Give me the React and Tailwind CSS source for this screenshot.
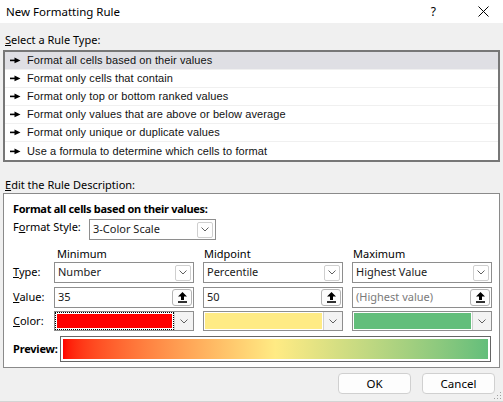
import React from 'react';

const RULES = [
    'Format all cells based on their values',
    'Format only cells that contain',
    'Format only top or bottom ranked values',
    'Format only values that are above or below average',
    'Format only unique or duplicate values',
    'Use a formula to determine which cells to format',
];

function Bullet() {
    return (
        <svg width="11" height="7" viewBox="0 0 11 7" className="shrink-0">
            <rect x="0" y="2.6" width="6" height="1.6" fill="#000" />
            <polygon points="4.5,0.5 10.5,3.4 4.5,6.3" fill="#000" />
        </svg>
    );
}

function Chevron() {
    return (
        <svg width="8" height="5" viewBox="0 0 8 5">
            <polyline points="0.5,0.5 4,4 7.5,0.5" fill="none" stroke="#606060" strokeWidth="1" />
        </svg>
    );
}

function Select({ value, className = '' }) {
    return (
        <div className={`h-[21px] bg-white border border-[#8e8e8e] flex items-center pl-[3px] pr-[2px] ${className}`}>
            <span className="flex-1 text-[#1a1a1a] whitespace-nowrap">{value}</span>
            <div className="w-[16px] h-[16px] border border-[#cfcfcf] rounded-[2px] flex items-center justify-center">
                <Chevron />
            </div>
        </div>
    );
}

function ValueBox({ value, muted }) {
    return (
        <div className="h-[21px] bg-white border border-[#8e8e8e] flex items-center pl-[3px] pr-px">
            <span className={`flex-1 whitespace-nowrap ${muted ? 'text-[#7a7a7a]' : 'text-[#1a1a1a]'}`}>{value}</span>
            <div className="w-[20px] h-[17px] border border-[#b4b4b4] rounded-[3px] bg-[#fdfdfd] flex items-center justify-center">
                <svg width="9" height="11" viewBox="0 0 9 11">
                    <polygon points="4.5,0 9,4.6 6,4.6 6,8 3,8 3,4.6 0,4.6" fill="#000" />
                    <rect x="0" y="9.2" width="9" height="1.6" fill="#000" />
                </svg>
            </div>
        </div>
    );
}

function ColorBox({ color, focused }) {
    return (
        <div className="h-[20px] bg-white border border-[#8e8e8e] flex items-stretch">
            <div className={`flex-1 p-px ${focused ? 'border border-dotted border-black' : 'p-[2px]'}`}>
                <div className="w-full h-full" style={{ background: color }} />
            </div>
            <div className="w-[19px] bg-[#f3f3f3] border-l border-[#d0d0d0] flex items-center justify-center">
                <Chevron />
            </div>
        </div>
    );
}

export default function App() {
    return (
        <div className="w-[503px] h-[402px] bg-[#f0f0f0] flex flex-col text-[11px] text-black overflow-hidden relative border-b border-[#d4d4d4]"
            style={{ fontFamily: '"Noto Sans", "Liberation Sans", sans-serif' }}>
            {/* title bar */}
            <div className="h-[23px] bg-white flex items-center pl-[6px] shrink-0">
                <span className="text-[11.5px]">New Formatting Rule</span>
                <span className="ml-auto mr-[42px] text-[12px]">?</span>
                <svg width="11" height="11" viewBox="0 0 11 11" className="mr-[14px]">
                    <path d="M0.5 0.5L10.5 10.5M10.5 0.5L0.5 10.5" stroke="#000" strokeWidth="1" />
                </svg>
            </div>

            <div className="px-[3px] flex flex-col">
                <div className="mt-[9px] h-[18px] leading-[16px] pl-[2px]">
                    <span className="underline">S</span>elect a Rule Type:
                </div>

                {/* rule list */}
                <div className="h-[112px] border-2 border-[#777] bg-white flex flex-col"
                    style={{ fontFamily: '"Liberation Sans", Arial, sans-serif' }}>
                    {RULES.map((r, i) => (
                        <div key={i}
                            className={`h-[18px] flex items-center gap-[6px] pl-[5px] border-b border-[#f0f0f0] ${i === 0 ? 'bg-[#dfdfe4]' : ''} ${i === 5 ? 'border-b-0' : ''}`}>
                            <Bullet />
                            <span className="text-[11px] tracking-[0.1px] text-[#111]">{r}</span>
                        </div>
                    ))}
                </div>

                <div className="mt-[15px] h-[16px] leading-[16px] pl-[2px]">
                    <span className="underline">E</span>dit the Rule Description:
                </div>

                {/* rule description panel */}
                <div className="h-[175px] border border-[#8a8a8a] bg-white pl-[9px] pt-[6px] flex flex-col">
                    <div className="h-[17px] leading-[17px] font-bold tracking-[-0.3px]">Format all cells based on their values:</div>
                    <div className="mt-[2px] flex items-start">
                        <div className="w-[76px] leading-[15px]">
                            F<span className="underline">o</span>rmat Style:
                        </div>
                        <Select value="3-Color Scale" className="w-[127px]" />
                    </div>

                    <div className="mt-[6px] grid grid-cols-[32px_140px_140px_140px] gap-x-[9px] items-center">
                        <div />
                        <div className="pl-[3px] h-[16px] leading-[16px]">Minimum</div>
                        <div className="pl-[1px] h-[16px] leading-[16px]">Midpoint</div>
                        <div className="pl-[1px] h-[16px] leading-[16px]">Maximum</div>
                    </div>

                    <div className="grid grid-cols-[32px_140px_140px_140px] gap-x-[9px] items-center">
                        <div><span className="underline">T</span>ype:</div>
                        <Select value="Number" />
                        <Select value="Percentile" />
                        <Select value="Highest Value" />
                    </div>

                    <div className="mt-[4px] grid grid-cols-[32px_140px_140px_140px] gap-x-[9px] items-center">
                        <div><span className="underline">V</span>alue:</div>
                        <ValueBox value="35" />
                        <ValueBox value="50" />
                        <ValueBox value="(Highest value)" muted />
                    </div>

                    <div className="mt-[3px] grid grid-cols-[32px_140px_140px_140px] gap-x-[9px] items-center">
                        <div><span className="underline">C</span>olor:</div>
                        <ColorBox color="#ff0000" focused />
                        <ColorBox color="#ffeb84" />
                        <ColorBox color="#63be7b" />
                    </div>

                    <div className="mt-[5px] flex items-center">
                        <div className="w-[47px] font-bold tracking-[-0.2px]">Preview:</div>
                        <div className="w-[431px] h-[26px] border border-[#666] p-[2px]">
                            <div className="w-full h-full bg-linear-to-r from-[#ff0000] via-[#ffeb84] to-[#63be7b]" />
                        </div>
                    </div>
                </div>

                {/* buttons */}
                <div className="mt-[5px] flex justify-end gap-[11px] pr-[5px]">
                    <button className="w-[73px] h-[21px] bg-[#fdfdfd] border border-[#d0d0d0] rounded-[4px] text-[11.5px]">OK</button>
                    <button className="w-[73px] h-[21px] bg-[#fdfdfd] border border-[#d0d0d0] rounded-[4px] text-[11.5px]">Cancel</button>
                </div>
            </div>

            {/* resize grip */}
            <svg width="8" height="8" viewBox="0 0 8 8" className="absolute right-[1px] bottom-[1px]">
                <rect x="6" y="0" width="1" height="1" fill="#a0a0a0" />
                <rect x="3" y="3" width="1" height="1" fill="#a0a0a0" />
                <rect x="6" y="3" width="1" height="1" fill="#a0a0a0" />
                <rect x="0" y="6" width="1" height="1" fill="#a0a0a0" />
                <rect x="3" y="6" width="1" height="1" fill="#a0a0a0" />
                <rect x="6" y="6" width="1" height="1" fill="#a0a0a0" />
            </svg>
        </div>
    );
}
